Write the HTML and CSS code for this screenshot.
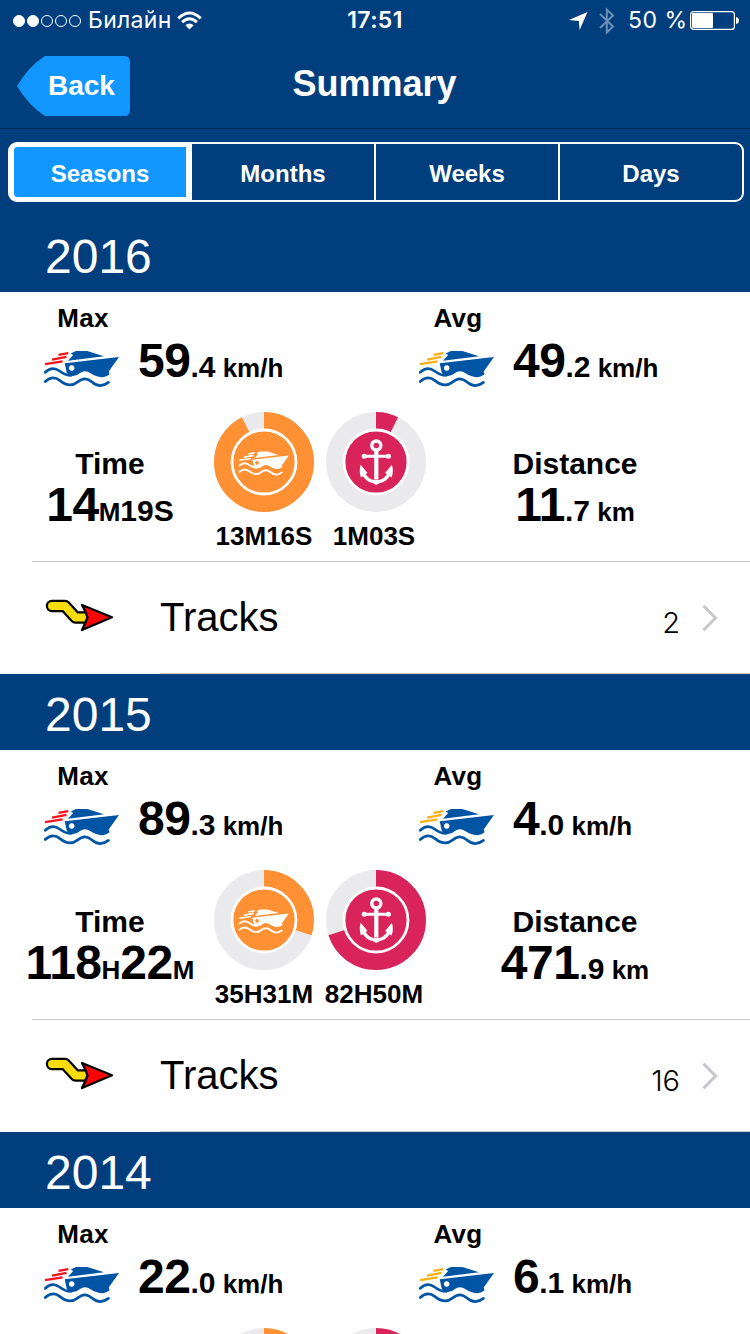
FILE: index.html
```html
<!DOCTYPE html>
<html lang="en">

<head>
    <meta charset="UTF-8">
    <meta name="viewport" content="width=device-width, initial-scale=1.0">
    <title>Summary</title>
    <link rel="stylesheet" href="styles.css">
</head>

<body>
    <!-- Shared icons -->
    <svg class="sprite" width="0" height="0">
        <symbol id="boat" viewBox="0 0 76 40">
            <path class="streaks" d="M14.5 5.8L24.3 4.1M8 10.7L22.5 7.9M1 15.2L18.6 12.4" fill="none" stroke-width="2.3" />
            <path d="M24 11.8L29.2 6 26.7 4.6 32 2H43.3L60 7.2Z" />
            <path fill-rule="evenodd" d="M20.7 14.3L75 8 64.7 22.5 65.6 25.3C60 29.8 53 28.6 47 24.6Q41 20.4 36 24Q31 28.6 25.5 26.4L22.8 24ZM27.7 16.2a2.8 2.8 0 1 0 .01 0Z" />
            <path d="M1.3 23.3C6 18.8 11 18.6 15.5 22S23 26.5 27 26.5M1.3 32.6C6 28.2 11 27.6 16 31.6S27 38 33 33.4 43 28.6 48 33 59 37.6 64.4 33.4" fill="none" stroke="currentColor" stroke-width="2.7" stroke-linecap="round" />
        </symbol>
        <symbol id="anchor" viewBox="0 0 40 48">
            <circle cx="20" cy="8" r="4.5" fill="none" stroke="#fff" stroke-width="3.4" />
            <path d="M17.9 13h4.2v29h-4.2z" />
            <path d="M8 18.7H32" stroke="#fff" stroke-width="3" />
            <circle cx="7.9" cy="18.7" r="2.5" />
            <circle cx="32.1" cy="18.7" r="2.5" />
            <path d="M4.4 27.3L11.2 35.4 9.3 36.6Q12.6 42 18 42.6H22Q27.4 42 30.7 36.6L28.8 35.4 35.6 27.3Q37.6 33.6 35.4 40L33.4 38.8Q29.6 44.6 23.6 45.6L20 47.4 16.4 45.6Q10.4 44.6 6.6 38.8L4.6 40Q2.4 33.6 4.4 27.3Z" />
        </symbol>
        <symbol id="track" viewBox="0 0 70 34">
            <path d="M7 7H20L30.5 18.5H41" fill="none" stroke="#000" stroke-width="12.4" stroke-linecap="round" stroke-linejoin="round" />
            <path d="M7 7H20L30.5 18.5H41" fill="none" stroke="#f8dc0c" stroke-width="8" stroke-linecap="round" stroke-linejoin="round" />
            <path d="M37 6L67 18.2 37 31Q40.500 24 42.500 18.500Q40.500 12 37 6Z" fill="#f00" stroke="#000" stroke-width="2.300" stroke-linejoin="round" />
        </symbol>
        <symbol id="chevron" viewBox="0 0 16 28">
            <path d="M1.500 1.700L13.500 14 1.500 26.300" fill="none" stroke="#c7c7cc" stroke-width="3" />
        </symbol>
    </svg>

    <header class="header">
        <div class="status">
            <div class="carrier">
                <div class="signal">
                    <i class="on"></i><i class="on"></i><i></i><i></i><i></i>
                </div>
                <span class="operator">Билайн</span>
                <svg width="25" height="19" viewBox="0 0 25 19" fill="none" stroke="#fff" stroke-width="3">
                    <path d="M1.300 7.300Q12.500-3.300 23.700 7.300M5.100 11.200Q12.500 4.300 19.900 11.200" />
                    <path d="M8.300 14.300Q12.500 10.500 16.700 14.300L12.500 18.500Z" fill="#fff" stroke="none" />
                </svg>
            </div>
            <div class="clock">17:51</div>
            <div class="power">
                <svg width="19" height="18" viewBox="0 0 19 18">
                    <path d="M18.500 0L10.600 18 9.900 8.900 0 7.900Z" fill="#fff" />
                </svg>
                <svg class="bluetooth" width="16" height="28" viewBox="0 0 16 28">
                    <path d="M1 7L14 19.500 7.800 25.500V2.500L14 8.500 1 21" fill="none" stroke="#6c90b5" stroke-width="2" />
                </svg>
                <span class="percent">50 %</span>
                <svg width="49" height="19" viewBox="0 0 49 19">
                    <rect x=".6" y=".6" width="43.800" height="17.800" rx="3" fill="none" stroke="#fff" stroke-width="1.200" />
                    <rect x="2" y="2" width="21" height="15" rx="1" fill="#fff" />
                    <path d="M46 6Q49 6.500 49 9.500T46 13Z" fill="#fff" />
                </svg>
            </div>
        </div>
        <nav class="navbar">
            <a class="back">
                <svg width="113" height="60" viewBox="0 0 113 60">
                    <path d="M28 0H107Q113 0 113 6V54Q113 60 107 60H28Q12 50 0 30Q12 10 28 0Z" fill="#1197ff" />
                </svg>
                <span>Back</span>
            </a>
            <h1>Summary</h1>
        </nav>
    </header>

    <div class="tabs">
        <div class="tab active">Seasons</div>
        <div class="tab">Months</div>
        <div class="tab">Weeks</div>
        <div class="tab">Days</div>
    </div>

    <section class="season">
        <h2>2016</h2>
        <div class="speeds">
            <div class="speed max">
                <div class="label">Max</div>
                <svg class="boat"><use href="#boat" /></svg>
                <div class="value"><b>59</b><span class="dec">.4</span><span class="unit"> km/h</span></div>
            </div>
            <div class="speed avg">
                <div class="label">Avg</div>
                <svg class="boat"><use href="#boat" /></svg>
                <div class="value"><b>49</b><span class="dec">.2</span><span class="unit"> km/h</span></div>
            </div>
        </div>
        <div class="totals">
            <div class="total time">
                <div class="title">Time</div>
                <div class="value"><b>14</b><span class="unit">M</span><span class="dec">19S</span></div>
            </div>
            <div class="donut moving">
                <svg width="100" height="100" viewBox="0 0 100 100">
                    <circle class="ring" cx="50" cy="50" r="50" />
                    <circle class="part" cx="50" cy="50" r="25" pathLength="100" stroke-dasharray="92.7 100" />
                    <circle class="disc" cx="50" cy="50" r="32" />
                    <use href="#boat" x="24.500" y="38" width="51" height="27" />
                </svg>
                <div class="caption">13M16S</div>
            </div>
            <div class="donut anchored">
                <svg width="100" height="100" viewBox="0 0 100 100">
                    <circle class="ring" cx="50" cy="50" r="50" />
                    <circle class="part" cx="50" cy="50" r="25" pathLength="100" stroke-dasharray="7.3 100" />
                    <circle class="disc" cx="50" cy="50" r="32" />
                    <use href="#anchor" x="30.300" y="25.500" width="40" height="48" />
                </svg>
                <div class="caption">1M03S</div>
            </div>
            <div class="total distance">
                <div class="title">Distance</div>
                <div class="value"><b>11</b><span class="dec">.7</span><span class="unit"> km</span></div>
            </div>
        </div>
        <div class="tracks">
            <svg class="track-icon"><use href="#track" /></svg>
            <div class="row">
                <span class="name">Tracks</span>
                <span class="count">2</span>
                <svg class="chevron"><use href="#chevron" /></svg>
            </div>
        </div>
    </section>

    <section class="season">
        <h2>2015</h2>
        <div class="speeds">
            <div class="speed max">
                <div class="label">Max</div>
                <svg class="boat"><use href="#boat" /></svg>
                <div class="value"><b>89</b><span class="dec">.3</span><span class="unit"> km/h</span></div>
            </div>
            <div class="speed avg">
                <div class="label">Avg</div>
                <svg class="boat"><use href="#boat" /></svg>
                <div class="value"><b>4</b><span class="dec">.0</span><span class="unit"> km/h</span></div>
            </div>
        </div>
        <div class="totals">
            <div class="total time">
                <div class="title">Time</div>
                <div class="value"><b>118</b><span class="unit">H</span><b>22</b><span class="unit">M</span></div>
            </div>
            <div class="donut moving">
                <svg width="100" height="100" viewBox="0 0 100 100">
                    <circle class="ring" cx="50" cy="50" r="50" />
                    <circle class="part" cx="50" cy="50" r="25" pathLength="100" stroke-dasharray="30 100" />
                    <circle class="disc" cx="50" cy="50" r="32" />
                    <use href="#boat" x="24.500" y="38" width="51" height="27" />
                </svg>
                <div class="caption">35H31M</div>
            </div>
            <div class="donut anchored">
                <svg width="100" height="100" viewBox="0 0 100 100">
                    <circle class="ring" cx="50" cy="50" r="50" />
                    <circle class="part" cx="50" cy="50" r="25" pathLength="100" stroke-dasharray="70 100" />
                    <circle class="disc" cx="50" cy="50" r="32" />
                    <use href="#anchor" x="30.300" y="25.500" width="40" height="48" />
                </svg>
                <div class="caption">82H50M</div>
            </div>
            <div class="total distance">
                <div class="title">Distance</div>
                <div class="value"><b>471</b><span class="dec">.9</span><span class="unit"> km</span></div>
            </div>
        </div>
        <div class="tracks">
            <svg class="track-icon"><use href="#track" /></svg>
            <div class="row">
                <span class="name">Tracks</span>
                <span class="count">16</span>
                <svg class="chevron"><use href="#chevron" /></svg>
            </div>
        </div>
    </section>

    <section class="season">
        <h2>2014</h2>
        <div class="speeds">
            <div class="speed max">
                <div class="label">Max</div>
                <svg class="boat"><use href="#boat" /></svg>
                <div class="value"><b>22</b><span class="dec">.0</span><span class="unit"> km/h</span></div>
            </div>
            <div class="speed avg">
                <div class="label">Avg</div>
                <svg class="boat"><use href="#boat" /></svg>
                <div class="value"><b>6</b><span class="dec">.1</span><span class="unit"> km/h</span></div>
            </div>
        </div>
        <div class="totals">
            <div class="total time"></div>
            <div class="donut moving">
                <svg width="100" height="100" viewBox="0 0 100 100">
                    <circle class="ring" cx="50" cy="50" r="50" />
                    <circle class="part" cx="50" cy="50" r="25" pathLength="100" stroke-dasharray="40 100" />
                </svg>
            </div>
            <div class="donut anchored">
                <svg width="100" height="100" viewBox="0 0 100 100">
                    <circle class="ring" cx="50" cy="50" r="50" />
                    <circle class="part" cx="50" cy="50" r="25" pathLength="100" stroke-dasharray="60 100" />
                </svg>
            </div>
        </div>
    </section>
</body>

</html>
```

FILE: styles.css
```css
* {
    box-sizing: border-box;
}

body {
    margin: 0;
    width: 750px;
    height: 1334px;
    overflow: hidden;
    background-color: #fff;
    color: #000;
    font-family: "Liberation Sans", Arial, sans-serif;
}

svg {
    display: block;
    flex: none;
}

.sprite {
    height: 0;
}

/* status bar and navigation */
.header {
    height: 129px;
    background-color: #003e7e;
    border-bottom: 1px solid #002a56;
    color: #fff;
}

.status {
    display: grid;
    grid-template-columns: 1fr 80px 1fr;
    height: 40px;
    font-family: Inter, "Noto Sans", sans-serif;
    font-size: 23px;
    line-height: 41px;
}

.carrier,
.power {
    display: flex;
    align-items: center;
}

.carrier {
    padding-left: 13px;
}

.signal {
    display: flex;
    gap: 2px;
}

.signal i {
    width: 12px;
    height: 12px;
    border: 1px solid #fff;
    border-radius: 50%;
}

.signal .on {
    background-color: #fff;
}

.operator {
    width: 96px;
    padding-left: 7px;
    letter-spacing: 0.3px;
}

.clock {
    text-align: center;
    font-weight: 600;
    letter-spacing: 0.4px;
}

.power {
    justify-content: flex-end;
    padding-right: 11px;
}

.bluetooth {
    margin: 0 13px 0 11px;
}

.percent {
    width: 62px;
    white-space: nowrap;
    letter-spacing: 0.5px;
}

.navbar {
    display: grid;
    grid-template-columns: 113px 1fr 113px;
    padding: 16px 18px 0 17px;
}

.back {
    display: grid;
    font-size: 28px;
    font-weight: bold;
    line-height: 60px;
}

.back svg,
.back span {
    grid-area: 1 / 1;
}

.back span {
    z-index: 1;
    padding-left: 31px;
}

h1 {
    margin: 0;
    font-size: 36px;
    line-height: 56px;
    text-align: center;
}

/* period switch */
.tabs {
    display: grid;
    grid-template-columns: 184px 184px 184px 184px;
    height: 87px;
    padding: 13px 6px 14px 8px;
    background-color: #003e7e;
    color: #fff;
    font-size: 24px;
    font-weight: bold;
    line-height: 57px;
    text-align: center;
}

.tab {
    height: 60px;
    border: 2px solid #fff;
    border-left: none;
    padding-top: 1px;
}

.tab:last-child {
    border-radius: 0 9px 9px 0;
}

.tab.active {
    border: 6px solid #fff;
    border-width: 5px 6px;
    border-radius: 9px 0 0 9px;
    background-color: #1197ff;
    line-height: 51px;
}

/* one season */
.season h2 {
    height: 76px;
    margin: 0;
    padding: 3px 0 0 45px;
    background-color: #003e7e;
    color: #fff;
    font-size: 48px;
    font-weight: normal;
    line-height: 76px;
}

.speeds {
    display: grid;
    grid-template-columns: 375px 375px;
    height: 120px;
    padding-top: 12px;
}

.speed {
    display: grid;
    grid-template-columns: 76px 1fr;
    grid-template-rows: 28px 60px;
    column-gap: 18px;
    padding-left: 44px;
}

.label {
    grid-column: 1 / 3;
    width: 78px;
    font-size: 26px;
    font-weight: bold;
    line-height: 28px;
    text-align: center;
    letter-spacing: 0.3px;
}

.boat {
    width: 76px;
    height: 40px;
    margin-top: 17px;
    color: #0054a4;
    fill: currentColor;
}

.max .streaks,
.max {
    stroke: none;
}

.speed .boat {
    --streak: #fab014;
}

.max .boat {
    --streak: #f5141e;
}

.streaks {
    stroke: var(--streak, #fff);
}

.value {
    font-size: 48px;
    font-weight: bold;
    line-height: 48px;
    white-space: pre;
}

.value b {
    letter-spacing: -0.5px;
}

.speed .value {
    padding-top: 5px;
}

.dec {
    font-size: 30px;
    line-height: 1;
}

.unit {
    font-size: 26px;
    line-height: 1;
}

.totals {
    display: grid;
    grid-template-columns: 208px 112px 112px 318px;
    height: 149px;
}

.total {
    padding-top: 35px;
    text-align: center;
}

.time {
    padding-left: 12px;
}

.distance {
    padding-right: 32px;
}

.title {
    font-size: 30px;
    font-weight: bold;
    line-height: 34px;
}

.donut svg {
    margin: 0 auto;
    fill: #fff;
    color: #fff;
}

.donut .ring {
    fill: #eaeaec;
}

.donut .part {
    fill: none;
    stroke: var(--tint);
    stroke-width: 50;
    transform: rotate(-90deg);
    transform-origin: 50px 50px;
}

.donut .disc {
    fill: var(--tint);
    stroke: #fff;
    stroke-width: 2.8;
}

.moving {
    --tint: #ff9033;
}

.anchored {
    --tint: #d9235b;
}

.caption {
    padding-top: 10px;
    font-size: 26px;
    font-weight: bold;
    line-height: 28px;
    text-align: center;
}

.anchored .caption {
    margin-left: -4px;
}

.tracks {
    display: flex;
    height: 113px;
    margin-left: 32px;
    padding-left: 13px;
    border-top: 1px solid #c8c7cc;
}

.track-icon {
    width: 70px;
    height: 34px;
    margin: 37px 45px 0 0;
}

.row {
    display: flex;
    flex: 1;
    align-items: center;
    border-bottom: 1px solid #c8c7cc;
}

.name {
    flex: 1;
    font-size: 40px;
}

.count {
    padding-top: 9px;
    font-family: Inter, "Noto Sans", sans-serif;
    font-size: 29px;
    font-weight: 300;
}

.chevron {
    width: 16px;
    height: 28px;
    margin: 0 32px 0 22px;
}
```
